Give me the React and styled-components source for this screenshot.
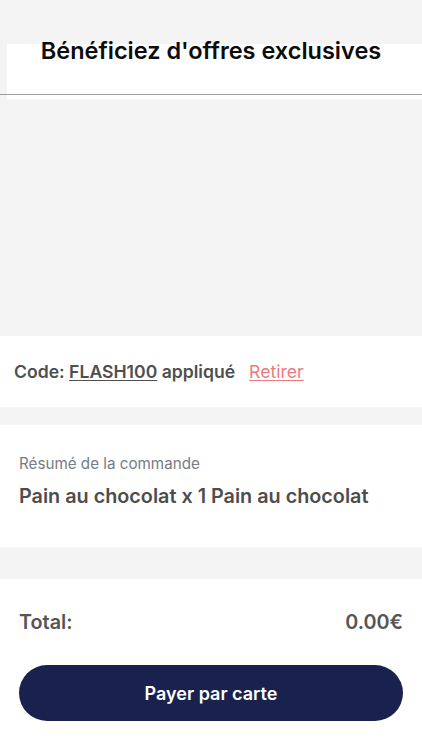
import React from 'react';
import styled, { createGlobalStyle } from 'styled-components';

const GlobalStyle = createGlobalStyle`
  html, body {
    margin: 0;
    padding: 0;
    background: #f4f4f4;
  }
  body {
    font-family: Inter, 'Liberation Sans', Arial, sans-serif;
    -webkit-font-smoothing: antialiased;
  }
`;

const Page = styled.div`
  width: 422px;
  min-height: 750px;
  display: flex;
  flex-direction: column;
  background: #f4f4f4;
  padding-top: 44px;
  box-sizing: border-box;
`;

const Banner = styled.div`
  position: relative;
  height: 55px;
  margin-left: 7px;
  background: #fff;
  display: flex;
  justify-content: center;
`;

const BannerTitle = styled.h2`
  margin: 0;
  margin-left: -7px;
  font-family: Inter, 'Noto Sans', sans-serif;
  font-weight: 600;
  font-size: 23.5px;
  line-height: 14px;
  color: #0c0c0c;
`;

const Rule = styled.div`
  position: absolute;
  left: -7px;
  right: 0;
  top: 50px;
  height: 1px;
  background: #9c9c9c;
`;

const PromoArea = styled.div`
  height: 237px;
`;

const Section = styled.div`
  background: #fff;
  margin-bottom: ${(p) => p.gap || 0}px;
  padding: ${(p) => p.pad};
  display: flex;
  flex-direction: ${(p) => (p.column ? 'column' : 'row')};
  align-items: ${(p) => (p.column ? 'stretch' : 'center')};
  min-height: ${(p) => p.h || 0}px;
  box-sizing: border-box;
  flex: ${(p) => (p.grow ? 1 : 'none')};
`;

const CodeText = styled.span`
  font-size: 17.6px;
  font-weight: 600;
  color: #4f4f4f;
`;

const CodeValue = styled.span`
  text-decoration: underline;
  text-underline-offset: 2px;
`;

const Remove = styled.span`
  margin-left: 14px;
  font-size: 17.6px;
  color: #ec7b7f;
  text-decoration: underline;
  text-underline-offset: 2px;
`;

const Label = styled.div`
  font-size: 15.2px;
  color: #767c86;
`;

const Items = styled.div`
  margin-top: 11px;
  font-size: 19.8px;
  font-weight: 600;
  color: #4d4d4d;
`;

const TotalRow = styled.div`
  display: flex;
  justify-content: space-between;
  font-size: 19.8px;
  font-weight: 600;
  color: #555;
`;

const PayButton = styled.button`
  margin-top: 31px;
  height: 56px;
  border: none;
  border-radius: 28px;
  background: #19224f;
  color: #fff;
  font-family: Inter, 'Liberation Sans', Arial, sans-serif;
  font-size: 18px;
  font-weight: 600;
  cursor: pointer;
`;

export default function App() {
  return (
    <>
      <GlobalStyle />
      <Page>
        <Banner>
          <BannerTitle>Bénéficiez d'offres exclusives</BannerTitle>
          <Rule />
        </Banner>
        <PromoArea />
        <Section h={71} gap={18} pad="0 14px 0 14px">
          <CodeText>
            Code: <CodeValue>FLASH100</CodeValue> appliqué
          </CodeText>
          <Remove>Retirer</Remove>
        </Section>
        <Section column h={122} gap={32} pad="29px 19px 0 19px">
          <Label>Résumé de la commande</Label>
          <Items>Pain au chocolat x 1 Pain au chocolat</Items>
        </Section>
        <Section column grow pad="31px 19px 20px 19px">
          <TotalRow>
            <span>Total:</span>
            <span>0.00€</span>
          </TotalRow>
          <PayButton>Payer par carte</PayButton>
        </Section>
      </Page>
    </>
  );
}
